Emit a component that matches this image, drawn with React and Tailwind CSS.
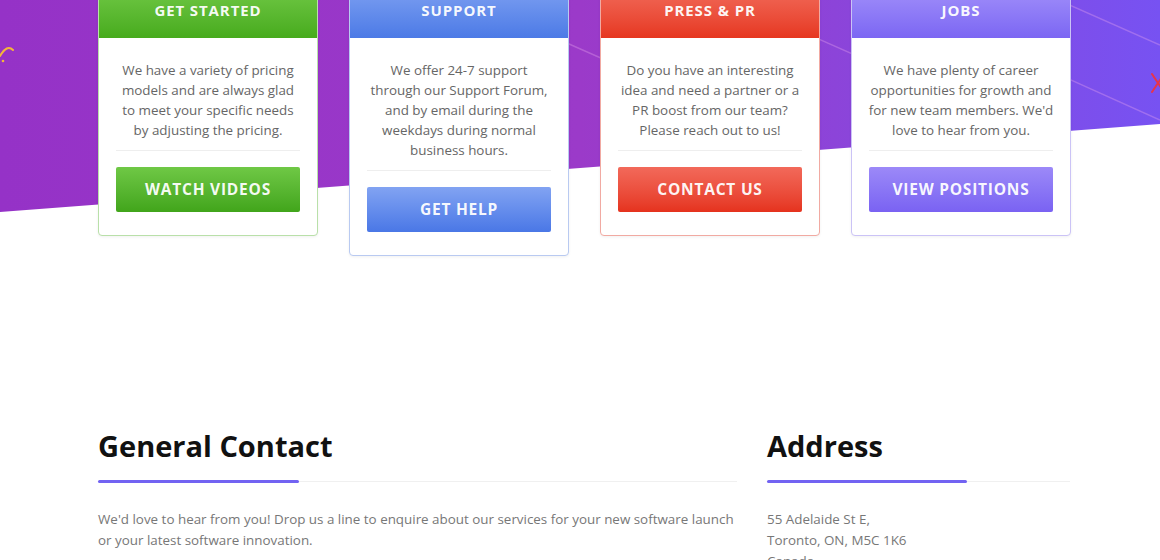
import React from 'react'

const cards = [
  {
    title: 'Get Started',
    text: 'We have a variety of pricing models and are always glad to meet your specific needs by adjusting the pricing.',
    button: 'Watch Videos',
    border: 'border-[#b9e0a9]',
    head: 'from-[#74cb48] to-[#47ab1c]',
    btn: 'from-[#6fc845] to-[#41a51a]',
  },
  {
    title: 'Support',
    text: 'We offer 24-7 support through our Support Forum, and by email during the weekdays during normal business hours.',
    button: 'Get Help',
    border: 'border-[#b9caf1]',
    head: 'from-[#82a3f2] to-[#4c7ae6]',
    btn: 'from-[#82a3f2] to-[#4a77e6]',
  },
  {
    title: 'Press & PR',
    text: 'Do you have an interesting idea and need a partner or a PR boost from our team? Please reach out to us!',
    button: 'Contact Us',
    border: 'border-[#f1aaa2]',
    head: 'from-[#f26e5e] to-[#e6361f]',
    btn: 'from-[#f2695a] to-[#e5321d]',
  },
  {
    title: 'Jobs',
    text: "We have plenty of career opportunities for growth and for new team members. We'd love to hear from you.",
    button: 'View Positions',
    border: 'border-[#cbc3f6]',
    head: 'from-[#a693fa] to-[#7c66f3]',
    btn: 'from-[#9c89f8] to-[#7a62f2]',
  },
]

const HeroBackground = () => (
  <svg
    className="absolute top-0 left-0"
    width="1160"
    height="215"
    viewBox="0 0 1160 215"
  >
    <defs>
      <linearGradient id="bg" x1="0" y1="0" x2="1" y2="0">
        <stop offset="0" stopColor="#9532c7" />
        <stop offset="0.5" stopColor="#9b3ac9" />
        <stop offset="0.72" stopColor="#8c44d9" />
        <stop offset="1" stopColor="#7752f2" />
      </linearGradient>
      <clipPath id="hero">
        <polygon points="0,0 1160,0 1160,124 0,212" />
      </clipPath>
    </defs>
    <polygon points="0,0 1160,0 1160,124 0,212" fill="url(#bg)" />
    <g clipPath="url(#hero)" stroke="#e9a6ee" strokeOpacity="0.35" strokeWidth="1.5" fill="none">
      <line x1="640" y1="-40" x2="1160" y2="190" />
      <line x1="760" y1="-60" x2="1160" y2="120" />
      <line x1="900" y1="-70" x2="1160" y2="45" />
      <line x1="560" y1="40" x2="900" y2="190" />
    </g>
    <path d="M0 56 Q7 44 13 50" stroke="#f4b63a" strokeWidth="2" fill="none" strokeLinecap="round" />
    <circle cx="3" cy="61" r="1.3" fill="#f4b63a" />
    <g stroke="#e8344a" strokeWidth="2" strokeLinecap="round">
      <line x1="1152" y1="74" x2="1164" y2="92" />
      <line x1="1152" y1="92" x2="1164" y2="74" />
    </g>
  </svg>
)

const Card = ({ card }) => (
  <div className={`w-[220px] rounded-[4px] border ${card.border} bg-white overflow-hidden shadow-[0_1px_3px_rgba(0,0,0,0.06)]`}>
    <div className={`h-[56px] flex items-center justify-center bg-gradient-to-b ${card.head} text-white/95 font-bold text-[15px] tracking-[0.06em] uppercase`}>
      {card.title}
    </div>
    <div className="px-[15px] pt-[22px] pb-[23px]">
      <p className="text-[13.4px] leading-[20px] text-[#666] text-center">{card.text}</p>
      <div className="mx-[2px] mt-[10px] border-t border-[#eeeeee]" />
      <div className="px-[2px]">
        <button className={`mt-[16px] h-[45px] w-full rounded-[2px] bg-gradient-to-b ${card.btn} text-white/95 font-bold text-[15.5px] tracking-[0.05em] uppercase`}>
          {card.button}
        </button>
      </div>
    </div>
  </div>
)

const SectionTitle = ({ children, bar }) => (
  <div>
    <h2 className="text-[29px] leading-[40px] font-bold text-[#111]">{children}</h2>
    <div className="mt-[14px] flex items-center">
      <div className={`${bar} h-[3px] bg-[#7263f2] rounded-full`} />
      <div className="flex-1 h-px bg-[#f0f0f0]" />
    </div>
  </div>
)

export default function App() {
  return (
    <div
      className="relative h-[560px] w-[1160px] overflow-hidden bg-white"
      style={{ fontFamily: '"Open Sans", "Liberation Sans", sans-serif' }}
    >
      <HeroBackground />
      <div className="relative ml-[98px] w-[973px] -mt-[19px]">
        <div className="flex items-start gap-[31px]">
          {cards.map((card) => (
            <Card key={card.title} card={card} />
          ))}
        </div>

        <div className="mt-[170px] flex gap-[30px]">
          <div className="w-[639px]">
            <SectionTitle bar="w-[201px]">General Contact</SectionTitle>
            <p className="mt-[26px] text-[13.4px] leading-[21px] text-[#777]">
              We'd love to hear from you! Drop us a line to enquire about our services for your new software launch or your latest software innovation.
            </p>
          </div>
          <div className="w-[303px]">
            <SectionTitle bar="w-[200px]">Address</SectionTitle>
            <p className="mt-[26px] text-[13.4px] leading-[21px] text-[#777]">
              55 Adelaide St E,
              <br />
              Toronto, ON, M5C 1K6
              <br />
              Canada
            </p>
          </div>
        </div>
      </div>
    </div>
  )
}
